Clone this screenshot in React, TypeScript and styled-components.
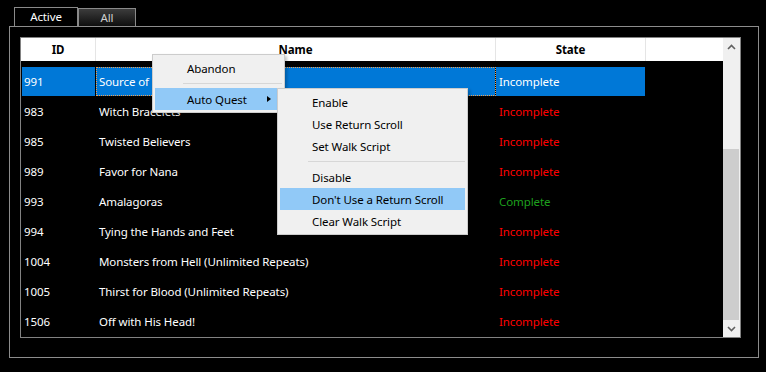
import React from 'react';
import styled, { createGlobalStyle } from 'styled-components';

const GlobalStyle = createGlobalStyle`
    html, body {
        margin: 0;
        padding: 0;
        background: #000;
    }
    body {
        font-family: "Noto Sans", "Liberation Sans", sans-serif;
        font-size: 11.5px;
        letter-spacing: -0.1px;
    }
`

type Quest = { id: number; name: string; done?: boolean };

const quests: Quest[] = [
    { id: 991, name: 'Source of Power' },
    { id: 983, name: 'Witch Bracelets' },
    { id: 985, name: 'Twisted Believers' },
    { id: 989, name: 'Favor for Nana' },
    { id: 993, name: 'Amalagoras', done: true },
    { id: 994, name: 'Tying the Hands and Feet' },
    { id: 1004, name: 'Monsters from Hell (Unlimited Repeats)' },
    { id: 1005, name: 'Thirst for Blood (Unlimited Repeats)' },
    { id: 1506, name: 'Off with His Head!' },
];

const subItems = [
    ['Enable', 'Use Return Scroll', 'Set Walk Script'],
    ['Disable', "Don't Use a Return Scroll", 'Clear Walk Script'],
];

const Chevron = ({ down }: { down?: boolean }) => (
    <svg width="9" height="6" viewBox="0 0 9 6">
        <polyline
            points={down ? '1,1 4.5,4.5 8,1' : '1,5 4.5,1.5 8,5'}
            fill="none"
            stroke="#606060"
            strokeWidth="1.6"
        />
    </svg>
)

const App = () => {
    return (
        <Page>
            <GlobalStyle />
            <TabStrip>
                <Tab $active>Active</Tab>
                <Tab>All</Tab>
            </TabStrip>
            <Panel>
                <ListView>
                    <Table>
                        <Header>
                            <HeadCell>ID</HeadCell>
                            <HeadCell>Name</HeadCell>
                            <HeadCell>State</HeadCell>
                            <HeadFill />
                        </Header>
                        <Rows>
                            {quests.map((q, i) => (
                                <Row key={q.id}>
                                    <Cell $selected={i === 0}>{q.id}</Cell>
                                    <Cell $selected={i === 0} $focus={i === 0}>{q.name}</Cell>
                                    <Cell $selected={i === 0} $state={q.done ? 'done' : 'open'}>
                                        {q.done ? 'Complete' : 'Incomplete'}
                                    </Cell>
                                </Row>
                            ))}
                        </Rows>
                    </Table>
                    <ScrollBar>
                        <ScrollArrow><Chevron /></ScrollArrow>
                        <ScrollTrack>
                            <ScrollThumb />
                        </ScrollTrack>
                        <ScrollArrow><Chevron down /></ScrollArrow>
                    </ScrollBar>
                </ListView>
            </Panel>

            <Menu style={{ left: 152, top: 54 }} $width={133}>
                <MenuItem>Abandon</MenuItem>
                <Separator />
                <MenuItem $hot>
                    Auto Quest
                    <SubArrow />
                </MenuItem>
            </Menu>

            <Menu style={{ left: 277, top: 88 }} $width={191}>
                {subItems.map((group, g) => (
                    <React.Fragment key={g}>
                        {g > 0 && <Separator />}
                        {group.map(label => (
                            <MenuItem key={label} $hot={label === "Don't Use a Return Scroll"}>
                                {label}
                            </MenuItem>
                        ))}
                    </React.Fragment>
                ))}
            </Menu>
        </Page>
    );
}

const Page = styled.div`
    position: relative;
    width: 766px;
    height: 372px;
    background: #000;
    overflow: hidden;
`

const TabStrip = styled.div`
    display: flex;
    align-items: flex-end;
    height: 19px;
    padding: 7px 0 0 14px;
`

const Tab = styled.div<{ $active?: boolean }>`
    box-sizing: border-box;
    display: flex;
    align-items: center;
    justify-content: center;
    width: ${p => (p.$active ? 64 : 58)}px;
    height: ${p => (p.$active ? 19 : 18)}px;
    border: 1px solid #8a8a8a;
    border-bottom: none;
    color: ${p => (p.$active ? '#fff' : '#d0d0d0')};
    background: ${p => (p.$active ? '#000' : 'linear-gradient(#3c3c3c, #0e0e0e)')};
    padding-bottom: 1px;
`

const Panel = styled.div`
    box-sizing: border-box;
    width: 750px;
    height: 332px;
    margin-left: 9px;
    padding: 10px 0 0 10px;
    border: 1px solid #8c8c8c;
`

const ListView = styled.div`
    box-sizing: border-box;
    display: flex;
    width: 721px;
    height: 301px;
    border: 1px solid #828282;
    overflow: hidden;
`

const Table = styled.div`
    display: flex;
    flex-direction: column;
    width: 702px;
`

const Header = styled.div`
    display: grid;
    grid-template-columns: 75px 400px 150px 1fr;
    height: 23px;
    background: #fff;
`

const HeadCell = styled.div`
    display: flex;
    align-items: center;
    justify-content: center;
    border-right: 1px solid #e5e5e5;
    font-weight: bold;
    color: #000;
`

const HeadFill = styled.div``

const Rows = styled.div`
    display: flex;
    flex-direction: column;
    padding-top: 6px;
`

const Row = styled.div`
    display: grid;
    grid-template-columns: 74px 400px 150px;
    height: 30px;
    padding-left: 1px;
`

const stateColor = { done: '#1ea01e', open: '#ff0000' }

const Cell = styled.div<{ $selected?: boolean; $focus?: boolean; $state?: 'done' | 'open' }>`
    box-sizing: border-box;
    display: flex;
    align-items: center;
    height: 29px;
    padding-left: 3px;
    white-space: nowrap;
    overflow: hidden;
    border-right: 1px solid #000;
    background: ${p => (p.$selected ? '#0078d7' : 'transparent')};
    color: ${p => (p.$selected || !p.$state ? '#fff' : stateColor[p.$state])};
    ${p => p.$focus && 'outline: 1px dotted #f0a050; outline-offset: -1px;'}

    &:first-child {
        padding-left: 2px;
    }
`

const ScrollBar = styled.div`
    display: flex;
    flex-direction: column;
    width: 17px;
    background: #f0f0f0;
`

const ScrollArrow = styled.div`
    display: flex;
    align-items: center;
    justify-content: center;
    height: 17px;
`

const ScrollTrack = styled.div`
    flex: 1;
    display: flex;
    flex-direction: column;
    justify-content: flex-end;
    padding: 0 1px 0 0;
`

const ScrollThumb = styled.div`
    height: 171px;
    background: #cdcdcd;
`

const Menu = styled.div<{ $width: number }>`
    position: absolute;
    box-sizing: border-box;
    width: ${p => p.$width}px;
    padding: 2px;
    background: #f0f0f0;
    border: 1px solid #cccccc;
    box-shadow: 2px 2px 3px rgba(0, 0, 0, 0.25);
    color: #000;
`

const MenuItem = styled.div<{ $hot?: boolean }>`
    position: relative;
    display: flex;
    align-items: center;
    height: 22px;
    padding-left: 32px;
    background: ${p => (p.$hot ? '#91c9f7' : 'transparent')};
`

const Separator = styled.div`
    height: 1px;
    margin: 4px 0 4px 28px;
    background: #d7d7d7;
`

const SubArrow = styled.span`
    position: absolute;
    right: 11px;
    top: 8px;
    width: 0;
    height: 0;
    border-top: 3.5px solid transparent;
    border-bottom: 3.5px solid transparent;
    border-left: 4px solid #000;
`

export default App;
